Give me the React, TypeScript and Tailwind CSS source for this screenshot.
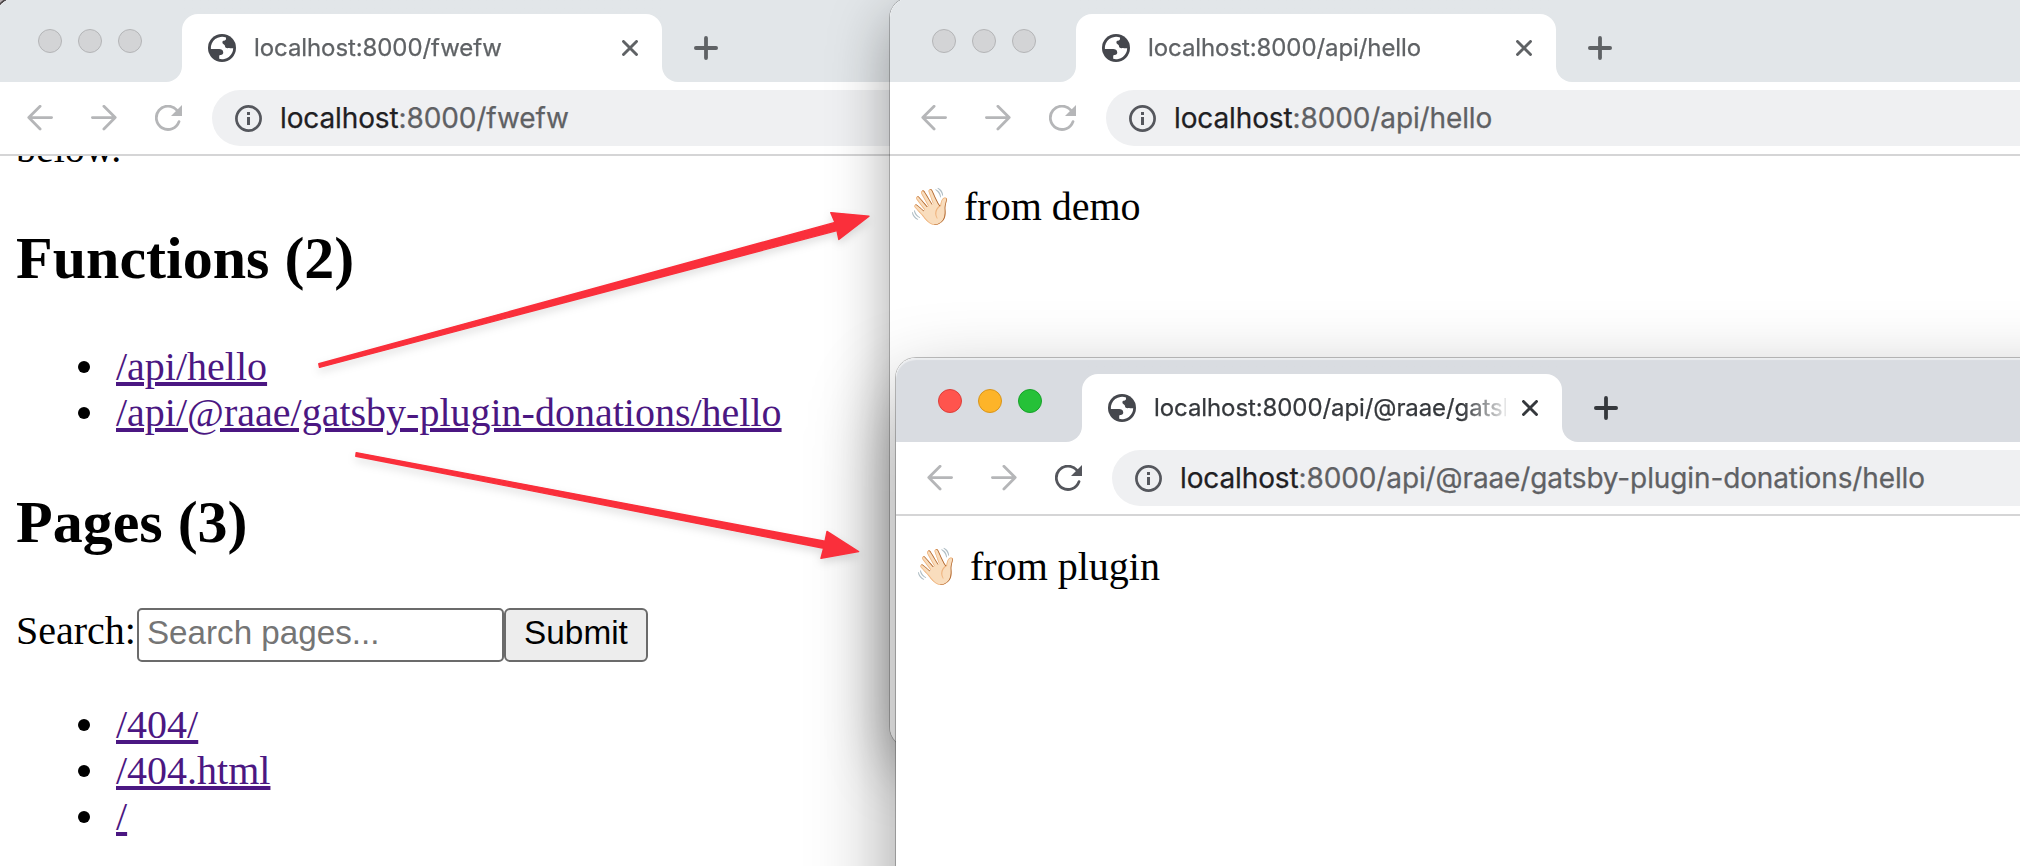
import type { ReactNode } from "react";
import clsx from "clsx";

function Globe() {
  return (
    <svg viewBox="2 2 20 20" className="size-7 shrink-0">
      <circle cx="12" cy="12" r="10" fill="#45474d" />
      <path
        d="M14.9 4.5L14.9 5.3C14.9 6.2 14.3 6.9 13.4 6.9C12.5 6.9 12.3 7.3 12.3 8.1C12.3 9 13 9.3 13.6 9.6C14.3 10 14 11 14.5 11.6C15.2 12.4 16.4 12 17.6 12.1C18.6 12.2 19.2 12.1 20 12.1A8 8 0 0 1 10 19.75L10 17.9C10 17.4 10.4 17 10.9 17C12.3 17 12.9 16.2 12.9 15.2C12.9 13.5 11.4 12.9 10 12.8L4.1 12.8A8 8 0 0 1 14.9 4.5Z"
        fill="#fff"
      />
    </svg>
  );
}

function BackArrow({ flip = false }: { flip?: boolean }) {
  return (
    <svg viewBox="0 0 26 26" className={clsx("size-[26px] shrink-0", flip && "-scale-x-100")}>
      <path d="M24.6 12.6H1.8M13.1 1.3L1.8 12.6l11.3 11.3" fill="none" stroke="#b5b6b8" strokeWidth="2.8" strokeLinecap="round" strokeLinejoin="round" />
    </svg>
  );
}

function Reload({ active }: { active: boolean }) {
  return (
    <svg viewBox="0 0 27 26" className={clsx("h-[26px] w-[27px] shrink-0", active ? "text-[#54565c]" : "text-[#b5b6b8]")}>
      <path d="M21.8 5.2A11.65 11.65 0 1 0 24 16.6" fill="none" stroke="currentColor" strokeWidth="2.8" strokeLinecap="round" />
      <path d="M27 0v11H16z" fill="currentColor" />
    </svg>
  );
}

function Info() {
  return (
    <svg viewBox="0 0 27 27" className="size-[27px] shrink-0">
      <circle cx="13.5" cy="13.5" r="12.1" fill="none" stroke="#55575d" strokeWidth="2.7" />
      <path d="M12 7h3v3h-3zM12 12h3v8h-3z" fill="#55575d" />
    </svg>
  );
}

type ChromeProps = { title: string; path: string; active?: boolean; children: ReactNode };

function Browser({ title, path, active = false, children }: ChromeProps) {
  const strip = active ? "bg-[#d9dce1]" : "bg-[#e2e6e9]";
  const ink = active ? "text-[#35383c]" : "text-[#5f6265]";
  const lights = active
    ? ["bg-[#ff544d] border-[#dd3f3a]", "bg-[#fdb429] border-[#d9951a]", "bg-[#25c138] border-[#17a229]"]
    : ["bg-[#d3d4d6] border-[#b4b5b7]", "bg-[#d3d4d6] border-[#b4b5b7]", "bg-[#d3d4d6] border-[#b4b5b7]"];
  return (
    <div className="flex h-full flex-col overflow-hidden rounded-[20px] bg-white">
      <div className="flex h-[84px] shrink-0 bg-white">
        <div className={clsx("flex w-[186px] shrink-0 items-center gap-4 rounded-br-2xl pt-0.5 pl-[42px]", strip)}>
          {lights.map((light, i) => (
            <span key={i} className={clsx("size-6 rounded-full border", light)} />
          ))}
        </div>
        <div
          className={clsx(
            "w-[480px] shrink-0 bg-linear-to-b from-50% to-white to-50% pt-4",
            active ? "from-[#d9dce1]" : "from-[#e2e6e9]",
          )}
        >
          <div className="flex h-[68px] items-center rounded-t-2xl bg-white pr-6 pl-[26px]">
            <Globe />
            <div
              className={clsx(
                "ml-[18px] w-[352px] overflow-hidden text-2xl leading-8 tracking-[-0.09px] whitespace-nowrap [-webkit-text-stroke:0.25px_currentColor] [mask-image:linear-gradient(to_right,#000_308px,transparent_358px)]",
                ink,
              )}
            >
              {title}
            </div>
            <svg viewBox="0 0 16 16" className={clsx("ml-auto size-4 shrink-0", ink)}>
              <path d="M1.5 1.5l13 13M14.5 1.5l-13 13" stroke="currentColor" strokeWidth="2.9" strokeLinecap="round" />
            </svg>
          </div>
        </div>
        <div className={clsx("flex flex-1 items-center rounded-bl-2xl pt-4 pl-8", strip)}>
          <svg viewBox="0 0 24 24" className={clsx("size-6", ink)}>
            <path d="M12 1.9v20.2M1.9 12h20.2" stroke="currentColor" strokeWidth="3.8" strokeLinecap="round" />
          </svg>
        </div>
      </div>
      <div className="flex h-[74px] shrink-0 items-center border-b-2 border-[#d5d5d6] pl-[31px]">
        <BackArrow />
        <div className="w-[38px]" />
        <BackArrow flip />
        <div className="w-[38px]" />
        <Reload active={active} />
        <div className="ml-[30px] flex h-14 flex-1 items-center rounded-l-full bg-[#eff0f2] pl-[23px]">
          <Info />
          <div className="ml-[18px] text-[28px] leading-9 tracking-[-0.12px] text-[#5f6164] [-webkit-text-stroke:0.25px_currentColor]">
            <span className="text-[#1f2023]">localhost</span>
            {path}
          </div>
        </div>
      </div>
      <div className="min-h-0 flex-1 overflow-hidden px-5 font-['Liberation_Serif',serif] text-[40px] leading-[46px] text-black">{children}</div>
    </div>
  );
}

function Links({ items }: { items: string[] }) {
  return (
    <ul className="pl-[62px]">
      {items.map((item) => (
        <li key={item} className="flex h-[46px] items-center gap-[26px]">
          <span className="size-3 rounded-full bg-black" />
          <a className="text-[#4b1782] underline decoration-4 underline-offset-2">{item}</a>
        </li>
      ))}
    </ul>
  );
}

function Greeting({ children }: { children: ReactNode }) {
  return (
    <p className="flex items-center pt-7">
      <span className="-ml-0.5 w-14 shrink-0 text-[36px]">👋🏻</span>
      {children}
    </p>
  );
}

export default function App() {
  return (
    <div className="relative h-[866px] w-[2020px] overflow-hidden bg-[#b8b0b3] font-['Inter',sans-serif]">
      <div className="absolute -top-0.5 -left-1 h-[1000px] w-[1700px] rounded-[20px] shadow-[0_0_0_2px_rgba(40,36,38,.75)]">
        <Browser title="localhost:8000/fwefw" path=":8000/fwefw">
          <p className="-mt-[30px]">below.</p>
          <h2 className="mt-[52px] text-[60px] leading-[69px] font-bold">Functions (2)</h2>
          <div className="h-[51px]" />
          <Links items={["/api/hello", "/api/@raae/gatsby-plugin-donations/hello"]} />
          <h2 className="mt-[52px] text-[60px] leading-[69px] font-bold">Pages (3)</h2>
          <form className="mt-[51px] flex h-[54px] items-start">
            <label>Search:</label>
            <input
              placeholder="Search pages..."
              className="ml-px h-[54px] w-[367px] rounded-[5px] border-2 border-[#6b6b6b] bg-white px-2 pb-[5px] font-['Liberation_Sans',sans-serif] text-[33.2px] leading-[38px] placeholder:text-[#757575]"
            />
            <button
              type="button"
              className="h-[54px] w-36 rounded-[6px] border-2 border-[#6b6b6b] bg-[#ededed] pb-[5px] font-['Liberation_Sans',sans-serif] text-[33.33px] leading-[38px]"
            >
              Submit
            </button>
          </form>
          <div className="h-10" />
          <Links items={["/404/", "/404.html", "/"]} />
        </Browser>
      </div>

      <div className="absolute -top-0.5 left-[890px] h-[749px] w-[1300px] rounded-[20px] shadow-[0_0_0_1px_rgba(0,0,0,.22),0_20px_60px_rgba(0,0,0,.36)]">
        <Browser title="localhost:8000/api/hello" path=":8000/api/hello">
          <Greeting>from demo</Greeting>
        </Browser>
      </div>

      <div className="absolute top-[358px] left-[896px] h-[700px] w-[1300px] rounded-[20px] shadow-[0_0_0_1px_rgba(0,0,0,.24),0_36px_84px_rgba(0,0,0,.42)]">
        <Browser active title="localhost:8000/api/@raae/gatsby-plugin-donations/hello" path=":8000/api/@raae/gatsby-plugin-donations/hello">
          <Greeting>from plugin</Greeting>
        </Browser>
        <div className="pointer-events-none absolute inset-0 rounded-[20px] shadow-[inset_0_2px_1px_rgba(255,255,255,.5)]" />
      </div>

      <svg viewBox="0 0 2020 866" className="pointer-events-none absolute inset-0 h-full w-full [filter:drop-shadow(0_4px_4px_rgba(0,0,0,.13))]">
        <g fill="#fa2f3b" stroke="#fa2f3b" strokeWidth="1.4" strokeLinejoin="round">
          <path d="M318.8 363.8L835 222.4L830.8 212.6L869 216.2L838.8 239.4L837 230.6L319.5 367.4Z" />
          <path d="M356.2 452.6L825 541.3L827 531.4L858.6 551.5L821 558.3L823.6 548.3L355.8 456.2Z" />
        </g>
      </svg>
    </div>
  );
}
